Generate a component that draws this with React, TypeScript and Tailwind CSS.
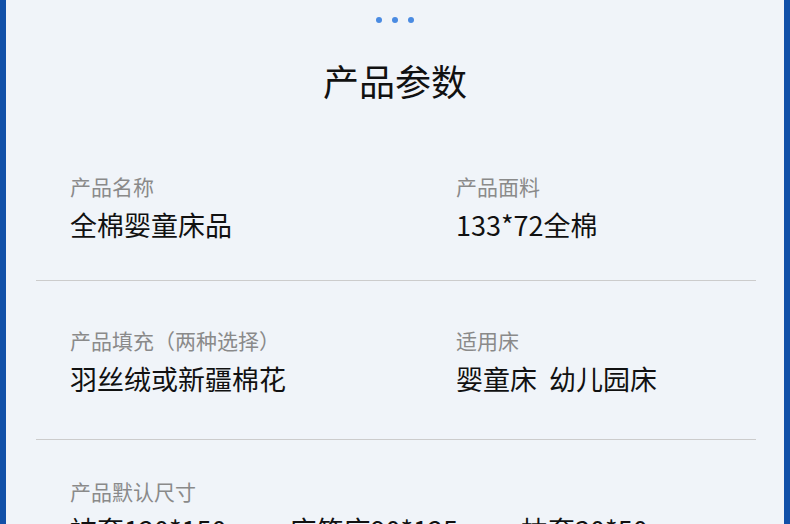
import React from 'react';

const font = { fontFamily: '"Noto Sans CJK SC", "Noto Sans", sans-serif' };

const Field: React.FC<{ label: string; value: string }> = ({ label, value }) => (
  <div>
    <div className="text-[21px] leading-[28px] text-[#8a8a8a]">{label}</div>
    <div className="mt-[8px] text-[27px] leading-[34px] text-[#111111] whitespace-pre">{value}</div>
  </div>
);

export default function App() {
  return (
    <div
      className="w-[790px] h-[524px] overflow-hidden bg-[#f0f4f9] border-x-[6px] border-[#1150a8]"
      style={font}
    >
      {/* dots */}
      <div className="pt-[17px] flex justify-center gap-[10px]">
        <span className="w-[6px] h-[6px] rounded-full bg-[#4a8be2]" />
        <span className="w-[6px] h-[6px] rounded-full bg-[#4a8be2]" />
        <span className="w-[6px] h-[6px] rounded-full bg-[#4a8be2]" />
      </div>

      <h1 className="mt-[36px] text-center text-[36px] leading-[42px] text-[#111111] font-normal">
        产品参数
      </h1>

      <div className="ml-[30px] w-[720px] mt-[71px]">
        {/* row 1 */}
        <div className="grid grid-cols-[386px_1fr] pl-[34px] pb-[38px] border-b border-[#cccccc]">
          <Field label="产品名称" value="全棉婴童床品" />
          <Field label="产品面料" value="133*72全棉" />
        </div>

        {/* row 2 */}
        <div className="grid grid-cols-[386px_1fr] pl-[34px] pt-[45px] pb-[43px] border-b border-[#cccccc]">
          <Field label="产品填充（两种选择）" value="羽丝绒或新疆棉花" />
          <Field label="适用床" value="婴童床  幼儿园床" />
        </div>

        {/* row 3 */}
        <div className="pl-[34px] pt-[37px]">
          <div className="text-[21px] leading-[28px] text-[#8a8a8a]">产品默认尺寸</div>
          <div className="mt-[8px] flex gap-[63px] text-[27px] leading-[34px] text-[#111111] whitespace-nowrap">
            <span>被套120*150</span>
            <span>床笠床90*125</span>
            <span>枕套30*50</span>
          </div>
        </div>
      </div>
    </div>
  );
}
